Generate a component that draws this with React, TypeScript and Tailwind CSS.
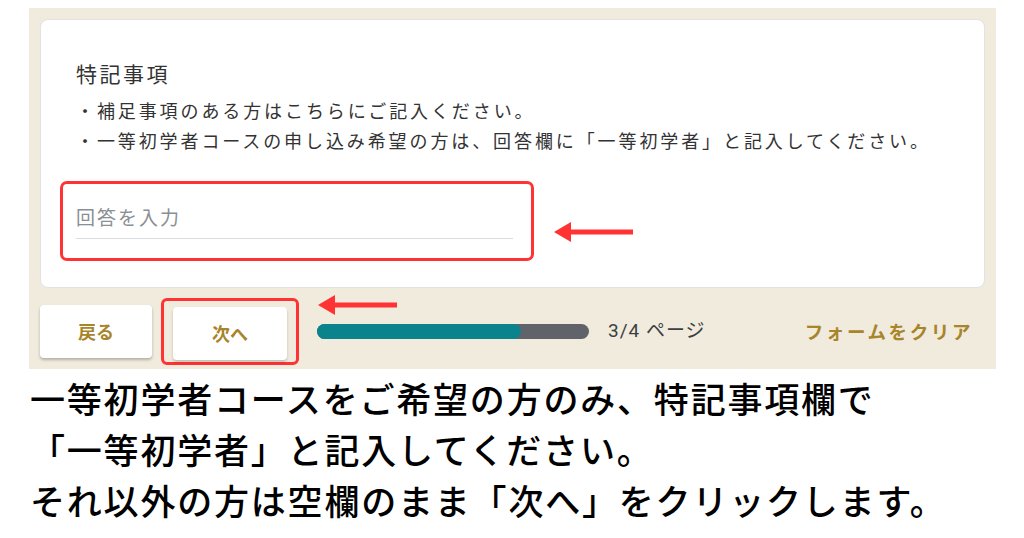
import React from "react";

function LeftArrow({ width }: { width: number }) {
  return (
    <svg width={width} height="22" viewBox={`0 0 ${width} 22`}>
      <polygon points="0,11 17,1 17,21" fill="#ff3333" />
      <rect x="15" y="8.5" width={width - 15} height="5" fill="#ff3333" />
    </svg>
  );
}

export default function App() {
  return (
    <div className="w-[1024px] h-[538px] bg-white overflow-hidden font-['Noto_Sans_CJK_JP',sans-serif]">
      <div className="ml-[29px] mt-[8px] w-[967px] h-[361px] bg-[#f0ebdc] pt-[11px] px-[11px]">
        <div className="h-[269px] bg-white rounded-[8px] border border-[#e2e2e2] pl-[35px] pt-[41px]">
          <div className="text-[21px] leading-[24px] tracking-[2.5px] text-[#333]">特記事項</div>
          <div className="mt-[10px] text-[18px] leading-[30px] tracking-[2.9px] text-[#333]">
            <div>・補足事項のある方はこちらにご記入ください。</div>
            <div>・一等初学者コースの申し込み希望の方は、回答欄に「一等初学者」と記入してください。</div>
          </div>

          <div className="flex items-center mt-[26px] -ml-[16px]">
            <div className="w-[474px] h-[80px] border-[3px] border-[#ff3333] rounded-[7px] pl-[13px] pr-[18px] pt-[20px]">
              <div className="border-b border-[#dadce0] pb-[8px] text-[19px] leading-[26px] tracking-[2px] text-[#8a8f94]">
                回答を入力
              </div>
            </div>
            <div className="ml-[20px] mt-[22px]">
              <LeftArrow width={79} />
            </div>
          </div>
        </div>

        <div className="flex items-center mt-[10px] pr-[12px]">
          <button className="w-[112px] h-[53px] bg-white rounded-[4px] shadow-[0_2px_3px_rgba(0,0,0,0.25)] text-[18px] font-bold text-[#a8842a]">
            戻る
          </button>
          <div className="ml-[9px] border-[3px] border-[#ff3333] rounded-[6px] px-[9px] pt-[6px] pb-[2px]">
            <button className="w-[114px] h-[53px] bg-white rounded-[4px] shadow-[0_2px_3px_rgba(0,0,0,0.2)] text-[18px] font-bold text-[#a8842a]">
              次へ
            </button>
          </div>
          <div className="relative ml-[18px] w-[272px] h-[15px] rounded-full bg-[#60646a]">
            <div className="h-full w-[204px] rounded-full bg-[#0b838d]" />
            <div className="absolute left-[1px] -top-[30px]">
              <LeftArrow width={79} />
            </div>
          </div>
          <div className="ml-[19px] text-[19px] tracking-[1px] text-[#3c4043] font-['Roboto','Noto_Sans_CJK_JP',sans-serif]">
            3/4 ページ
          </div>
          <div className="ml-auto text-[18.5px] font-bold tracking-[2.6px] text-[#a8842a]">フォームをクリア</div>
        </div>
      </div>

      <div className="ml-[30px] mt-[3px] text-[35px] leading-[51px] font-medium tracking-[1.8px] text-black">
        <div>一等初学者コースをご希望の方のみ、特記事項欄で</div>
        <div>「一等初学者」と記入してください。</div>
        <div>それ以外の方は空欄のまま「次へ」をクリックします。</div>
      </div>
    </div>
  );
}
